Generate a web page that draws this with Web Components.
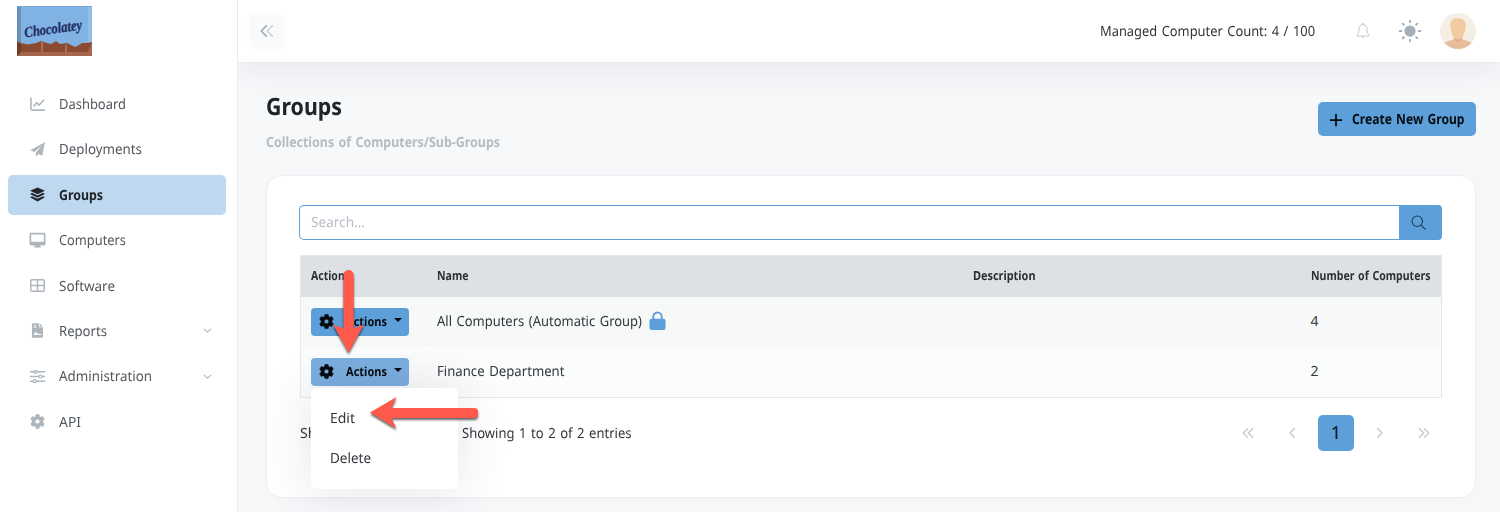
<!DOCTYPE html>
<html lang="en">
<head>
<meta charset="utf-8">
<title>Groups</title>
<style>
html,body{margin:0;height:512px;overflow:hidden}
body{font-family:"Noto Sans","Open Sans",sans-serif;font-size:14px;line-height:20px;color:#32363b;background:#f7f8fa;text-rendering:geometricPrecision;position:relative}
</style>
</head>
<body>
<groups-app></groups-app>
<script>
const ICONS={
 chart:'<path d="M1 1v11.5a1.500 1.500 0 0 0 1.500 1.500H15.500M4.200 9.500 7.200 6.100l2.500 2.500 4.800-5.200" fill="none" stroke="currentColor" stroke-width="1.700" stroke-linecap="round" stroke-linejoin="round"/>',
 plane:'<path d="M15.900.200.300 8.800l4.300 1.900L12.800 3.800 6.300 11.500v4.200l2.600-2.900 4.200 1.900z" fill="currentColor"/>',
 layers:'<path d="M8 .400 15.900 4 8 7.800.100 4zM2.200 6.200 8 9l5.800-2.800 2.100 1.200L8 11.400.100 7.400zM2.200 9.800 8 12.600 13.800 9.800l2.100 1.200L8 15.500.100 11z" fill="currentColor"/>',
 monitor:'<path fill-rule="evenodd" d="M1-.200h14A1.500 1.500 0 0 1 16.500 1.300v10.400A1.500 1.500 0 0 1 15 13.200h-4.700l.3 1.300h1.400v1H4v-1h1.400l.3-1.300H1A1.500 1.500 0 0 1-.500 11.700V1.300A1.500 1.500 0 0 1 1-.200zM1.300 1.500v7.700h13.400V1.500z" fill="currentColor"/>',
 grid:'<rect x=".8" y="1.800" width="14.400" height="12.400" rx="1.300" fill="none" stroke="currentColor" stroke-width="1.600"/><path d="M8 2v12M1 8h14" stroke="currentColor" stroke-width="1.600"/>',
 file:'<path fill-rule="evenodd" d="M3.500.300h6V4.500h4.300v9.800a1.400 1.400 0 0 1-1.400 1.400H3.500A1.400 1.400 0 0 1 2.100 14.300V1.700A1.400 1.400 0 0 1 3.500.300zM3.800 2v1h3V2zm0 2v1h3V4zM4 12.700h8v-1H9.500L8.700 10.600l-.9.800L6.500 9.300 4 12z" fill="currentColor"/><path d="M10.400.500l3.300 3.200h-3.300z" fill="currentColor"/>',
 sliders:'<path d="M.500 3h4M7.500 3h8M.500 8h8.800M12.500 8h3M.500 13h2.800M6.500 13h9" stroke="currentColor" stroke-width="1.600" stroke-linecap="round"/><g fill="none" stroke="currentColor" stroke-width="1.300"><circle cx="6" cy="3" r="1.600"/><circle cx="11" cy="8" r="1.600"/><circle cx="5" cy="13" r="1.600"/></g>',
 gear:'<path fill-rule="evenodd" d="M6.300.500h3.400l.5 2.100 1.300.8 2.100-.7 1.700 3-1.600 1.500v1.600l1.600 1.500-1.700 3-2.100-.7-1.300.8-.5 2.100H6.300l-.5-2.100-1.300-.8-2.100.7-1.700-3 1.600-1.500V7.200L.700 5.700l1.700-3 2.100.7 1.300-.8zM8 5.500a2.500 2.500 0 1 0 0 5 2.500 2.500 0 1 0 0-5z" fill="currentColor" stroke="currentColor" stroke-width=".5" stroke-linejoin="round"/>',
 down:'<path d="M2 5.500 8 11l6-5.500" fill="none" stroke="currentColor" stroke-width="2" stroke-linecap="round" stroke-linejoin="round"/>',
 left:'<path d="M10.200 3.800 6 8l4.200 4.200" fill="none" stroke="currentColor" stroke-width="1.500" stroke-linecap="round" stroke-linejoin="round"/>',
 right:'<path d="M5.800 3.800 10 8l-4.200 4.200" fill="none" stroke="currentColor" stroke-width="1.500" stroke-linecap="round" stroke-linejoin="round"/>',
 dleft:'<path d="M7.500 3.800 3.300 8l4.200 4.200M12.500 3.800 8.300 8l4.200 4.200" fill="none" stroke="currentColor" stroke-width="1.500" stroke-linecap="round" stroke-linejoin="round"/>',
 dright:'<path d="M8.500 3.800 12.700 8l-4.200 4.200M3.500 3.800 7.700 8l-4.200 4.200" fill="none" stroke="currentColor" stroke-width="1.500" stroke-linecap="round" stroke-linejoin="round"/>',
 fold:'<path d="M7.300 2.800 2.200 8l5.100 5.200" fill="none" stroke="#a2a9b1" stroke-width="1.700" stroke-linecap="round" stroke-linejoin="round"/><path d="M13.300 2.800 8.200 8l5.100 5.200" fill="none" stroke="#ced3d8" stroke-width="1.700" stroke-linecap="round" stroke-linejoin="round"/>',
 bell:'<path d="M8 1.500C4.800 1.500 4 4 4 7c0 3-.8 4.300-2.200 5.400v.6h12.400v-.6C12.800 11.300 12 10 12 7c0-3-.8-5.500-4-5.500zM6.600 13.500a1.500 1.500 0 0 0 2.800 0M7 1.300a1 1 0 0 1 2 0" fill="none" stroke="currentColor" stroke-width="1"/>',
 sun:'<circle cx="8" cy="8" r="5" fill="currentColor"/><path d="M8-1.200V.300M8 15.700v1.500M-1.200 8H.300M15.700 8h1.500M1.500 1.500l1.100 1.100M13.400 13.400l1.100 1.100M1.500 14.500l1.100-1.100M13.400 2.600l1.100-1.100" stroke="currentColor" stroke-width="1.700" stroke-linecap="round"/>',
 plus:'<path d="M8 1.800v12.400M1.800 8h12.400" stroke="currentColor" stroke-width="2" stroke-linecap="round"/>',
 search:'<circle cx="6.700" cy="6.700" r="5.600" fill="none" stroke="currentColor" stroke-width="1.100"/><path d="m10.800 10.800 4.300 4.300" stroke="currentColor" stroke-width="1.200" stroke-linecap="round"/>',
 lock:'<path d="M4 7V3.500a4 4 0 0 1 8 0v3.500" fill="none" stroke="currentColor" stroke-width="1.800"/><rect x=".4" y="5.400" width="15.200" height="10.600" rx="2.200" fill="currentColor"/>',
 caret:'<path d="M0 4h16L8 12z" fill="currentColor"/>'
};
function define(name,html,setup){
 customElements.define(name,class extends HTMLElement{
  constructor(){super();const t=document.createElement('template');t.innerHTML=html;this.attachShadow({mode:'open'}).append(t.content.cloneNode(true));}
  connectedCallback(){if(setup)setup.call(this,this.shadowRoot);}
 });
}
define('ui-icon','<style>:host{display:block;flex:none;width:15px;height:15px}svg{display:block;width:100%;height:100%;overflow:visible}</style><svg viewBox="0 0 16 16"></svg>',function(r){
 r.querySelector('svg').innerHTML=ICONS[this.getAttribute('name')]||'';
 const s=this.getAttribute('size');if(s)this.style.width=this.style.height=s+'px';
});
/* A label condensed or widened to the width given in "w". */
define('fit-text','<style>:host{display:inline-block;white-space:nowrap;flex:none;padding-top:var(--pt,2px)}span{display:inline-block;transform-origin:0 50%;word-spacing:.09em}</style><span><slot></slot></span>',function(r){
 const w=+this.getAttribute('w'),s=r.querySelector('span'),nat=s.offsetWidth;
 if(nat&&w){s.style.transform=`scaleX(${(w/s.getBoundingClientRect().width).toFixed(4)})`;this.style.width=w+'px';}
});
define('choco-logo',`<style>:host{display:block;width:75px;height:50px}svg{display:block;overflow:visible}</style>
<svg width="75" height="50" viewBox="0 0 75 50"><rect width="75" height="50" fill="#80b3e3"/><path d="M0 0h4v37H0z" fill="#6793bb"/><path d="M71 0h4v37h-4z" fill="#92bee8"/><path d="M0 0h75v1H0z" fill="#78a8d5"/>
<path d="M0 35l4 2 7 1.500 8-1.500 5-2 6 2 4 1 5-3 4 3 7-1 4 2 4 2 4-2 3-2 5 0 5-1V50H0z" fill="#8b4b30"/><path d="M0 50l4-4h67l4-10v14z" fill="#a5664e"/><path d="M0 36l4 2v8l-4 4z" fill="#703c28"/><path d="M25 36v10M49 38.500v8" stroke="#b27a62" stroke-width="1.600"/>
<text x="8" y="31.500" textLength="58" lengthAdjust="spacingAndGlyphs" transform="rotate(-8 8 31)" font-family="Liberation Serif,serif" font-style="italic" font-weight="700" font-size="15" fill="#222c63" stroke="#222c63" stroke-width=".3">Chocolatey</text></svg>`);
define('user-avatar',`<style>:host{display:block;width:36px;height:36px}svg{display:block}</style><svg width="36" height="36" viewBox="0 0 36 36"><defs><clipPath id="c"><circle cx="18" cy="18" r="18"/></clipPath></defs><g clip-path="url(#c)"><path fill="#f4eee4" d="M0 0h36v36H0z"/><path d="M3 31c3-3 8-3.500 11-4.800V22h8v4.200c3 1.300 8 1.800 11 4.800v5H3z" fill="#e7be9c"/><path d="M13.800 25.500c2.500 3.500 6 3.500 8.600 0V22h-8.600z" fill="#d9ad88"/><path d="M18 5.300c-5.500 0-8 3-7.600 8 .4 5 1.500 8.500 3.500 11 2.300 3 6 3 8.300 0 2-2.500 3.100-6 3.500-11 .4-5-2.200-8-7.700-8z" fill="#f1cb9f"/></g></svg>`);
define('nav-item',`<style>:host{display:flex;align-items:center;box-sizing:border-box;height:40px;padding:0 11px 0 22px;border-radius:5px;color:#53585e;margin-bottom:5.400px}
ui-icon.i{color:#adb5bd;margin-right:14.300px}:host([active]){background:#bed8ef;color:#202429;font-weight:700}:host([active]) .i{color:#202429}.c{margin-left:auto;margin-right:3px;color:#b4bac2}</style><ui-icon class="i"></ui-icon><slot></slot>`,function(r){
 const i=r.querySelector('.i');i.setAttribute('name',this.getAttribute('icon'));i.connectedCallback();
 if(this.hasAttribute('expandable')){
  const c=document.createElement('ui-icon');c.className='c';c.setAttribute('size','9');c.setAttribute('name','down');r.append(c);
 }
});
define('side-nav',`<style>:host{display:block;box-sizing:border-box;width:238px;height:512px;background:#fff;border-right:1px solid #e8eaee;padding:6px 11px 0 8px}choco-logo{margin:0 0 28px 9px}</style>
<choco-logo></choco-logo><nav>
<nav-item icon="chart"><fit-text w="67">Dashboard</fit-text></nav-item>
<nav-item icon="plane"><fit-text w="83">Deployments</fit-text></nav-item>
<nav-item icon="layers" active><fit-text w="44">Groups</fit-text></nav-item>
<nav-item icon="monitor"><fit-text w="67">Computers</fit-text></nav-item>
<nav-item icon="grid"><fit-text w="56">Software</fit-text></nav-item>
<nav-item icon="file" expandable><fit-text w="48">Reports</fit-text></nav-item>
<nav-item icon="sliders" expandable><fit-text w="93">Administration</fit-text></nav-item>
<nav-item icon="gear"><fit-text w="22">API</fit-text></nav-item></nav>`);
define('top-bar',`<style>:host{display:flex;align-items:center;box-sizing:border-box;height:62px;background:#fff;padding:0 24px 0 12px;box-shadow:0 10px 30px rgba(60,55,75,.07),0 0 1px #d8dbe0}
.f{width:34px;height:34px;border-radius:6px;background:#f9fafb;box-shadow:0 0 5px #f7f8fa;display:flex;align-items:center;justify-content:center}.m{margin-left:auto}.b{color:#c6ccd3;margin:0 30.500px 0 39.500px}.s{color:#a5afb9;margin-right:21px}</style>
<div class="f"><ui-icon name="fold" size="16"></ui-icon></div><fit-text class="m" w="215">Managed Computer Count: 4 / 100</fit-text><ui-icon class="b" name="bell" size="16"></ui-icon><ui-icon class="s" name="sun" size="18"></ui-icon><user-avatar></user-avatar>`);
define('page-heading',`<style>:host{display:flex;justify-content:space-between;align-items:flex-start;height:113px;box-sizing:border-box;padding-top:31px}
h1{font-size:24px;line-height:28px;margin:0;color:#202429;font-weight:700;--pt:0px}p{margin:12px 0 0;font-weight:700;color:#b5bbc3;font-size:14px;line-height:20px;--pt:0px}h1 fit-text,p fit-text{display:block}
button{all:unset;box-sizing:border-box;margin-top:9px;width:158px;height:34px;border-radius:5px;background:#5c9fd9;color:#060b10;font-weight:700;display:flex;align-items:center;padding-left:11px;line-height:20px}ui-icon{margin:2px 8.500px 0 0}</style>
<div><h1><fit-text w="76">Groups</fit-text></h1><p><fit-text w="234">Collections of Computers/Sub-Groups</fit-text></p></div><button><ui-icon name="plus" size="14"></ui-icon><fit-text w="112.5">Create New Group</fit-text></button>`);
define('search-bar',`<style>:host{display:flex;height:35px;box-sizing:border-box;margin-left:-.5px}.i{flex:1;border:1px solid #5c9fd9;border-right:0;border-radius:5px 0 0 5px;background:#fff;color:#b7bdc6;padding:5px 11px;box-sizing:border-box}.b{width:43px;background:#5c9fd9;border-radius:0 4px 4px 0;display:flex;align-items:center;justify-content:center;color:#173a5a}ui-icon{margin-right:4px}</style><div class="i"><fit-text w="54">Search...</fit-text></div><div class="b"><ui-icon name="search"></ui-icon></div>`);
define('action-button',`<style>:host{display:flex;align-items:center;box-sizing:border-box;width:98px;height:28px;border-radius:4px;background:#5c9fd9;color:#050a0e;font-weight:700;font-size:12.500px;padding-left:8.500px}:host([open]){background:#7aaede}.g{margin-right:12px}.c{margin:-3px 0 0 6.500px}</style><ui-icon class="g" name="gear" size="15"></ui-icon><fit-text w="41">Actions</fit-text><ui-icon class="c" name="caret" size="8"></ui-icon>`);
define('action-menu',`<style>:host{display:block;position:absolute;left:10px;top:132px;z-index:5;width:147px;height:101px;box-sizing:border-box;border-radius:5px;background:#fff;box-shadow:0 0 50px rgba(82,63,105,.15);padding:10px 0}div{height:39.500px;display:flex;align-items:center;padding-left:19px;--pt:2.5px}</style><div><fit-text w="25">Edit</fit-text></div><div><fit-text w="41">Delete</fit-text></div>`);
define('group-table',`<style>:host{display:block;position:relative;box-sizing:border-box;border:1px solid #e6e9ec;height:143px;--pt:0px}.r{display:grid;grid-template-columns:125.500px 536px 338px 1fr;align-items:center;height:50px;background:#f7f9f9}.r>*{margin-left:10.500px}.r>action-button{margin-left:10px;margin-top:-1px;--pt:1px}.h{height:41px;background:#dde1e6;color:#2c3035;font-weight:700;font-size:12.500px}.h>div{padding-bottom:1px}.z{background:#fbfcfc}.n{display:flex;align-items:center;color:#34383d}ui-icon{color:#5c9fd9;margin:-1px 0 0 7px}</style>
<div class="r h"><div><fit-text w="39">Actions</fit-text></div><div><fit-text w="31.5">Name</fit-text></div><div><fit-text w="62.5">Description</fit-text></div><div><fit-text w="119.5">Number of Computers</fit-text></div></div>
<div class="r"><action-button></action-button><div class="n"><fit-text w="205">All Computers (Automatic Group)</fit-text><ui-icon name="lock" size="17"></ui-icon></div><div></div><div>4</div></div>
<div class="r z"><action-button open></action-button><div class="n"><fit-text w="127.5">Finance Department</fit-text></div><div></div><div>2</div></div><action-menu></action-menu>`);
define('table-footer',`<style>:host{display:flex;align-items:center;height:36px;margin-top:17px;--pt:1px}.e{margin-left:126.500px}.p{display:flex;margin-left:auto;gap:8px;color:#c6ccd4}.p>div{width:36px;height:36px;display:flex;align-items:center;justify-content:center}.p .o{background:#5c9fd9;color:#07101a;border-radius:5px;font-size:18px}</style>
<fit-text w="36">Show</fit-text><fit-text class="e" w="169.5">Showing 1 to 2 of 2 entries</fit-text><div class="p"><div><ui-icon name="dleft" size="16"></ui-icon></div><div><ui-icon name="left" size="16"></ui-icon></div><div class="o">1</div><div><ui-icon name="right" size="16"></ui-icon></div><div><ui-icon name="dright" size="16"></ui-icon></div></div>`);
define('group-card',`<style>:host{display:block;box-sizing:border-box;height:323px;border:1px solid #eceef1;border-radius:16px;background:#fff;padding:29px 33px;box-shadow:0 0 20px rgba(76,87,125,.02)}search-bar{margin-bottom:15px}</style><search-bar></search-bar><group-table></group-table><table-footer></table-footer>`);
define('callout-arrows',`<style>:host{position:absolute;left:0;top:0;z-index:10;pointer-events:none;filter:drop-shadow(0 2px 1.200px rgba(0,0,0,.6))}svg{display:block}</style><svg width="500" height="440" fill="#ff594c"><path d="M343.500 275a5.100 5.100 0 0 1 10.200 0v53.500l10.300-4L348.600 352.500 333 324.500l10.500 4z"/><path d="M475 408a3.500 3.500 0 0 1 3 3.500v3a3.500 3.500 0 0 1-3 3.500h-83.500l5 10.500L370 412.500l26.500-15.500-5 11z"/></svg>`);
define('groups-app',`<style>:host{display:grid;grid-template-columns:238px 1fr;height:512px}main{background:#f7f8fa;min-width:0;overflow:hidden}section{padding:0 24px 0 27.500px}top-bar{position:relative}</style><side-nav></side-nav><main><top-bar></top-bar><section><page-heading></page-heading><group-card></group-card></section></main><callout-arrows></callout-arrows>`);
</script>
</body>
</html>
